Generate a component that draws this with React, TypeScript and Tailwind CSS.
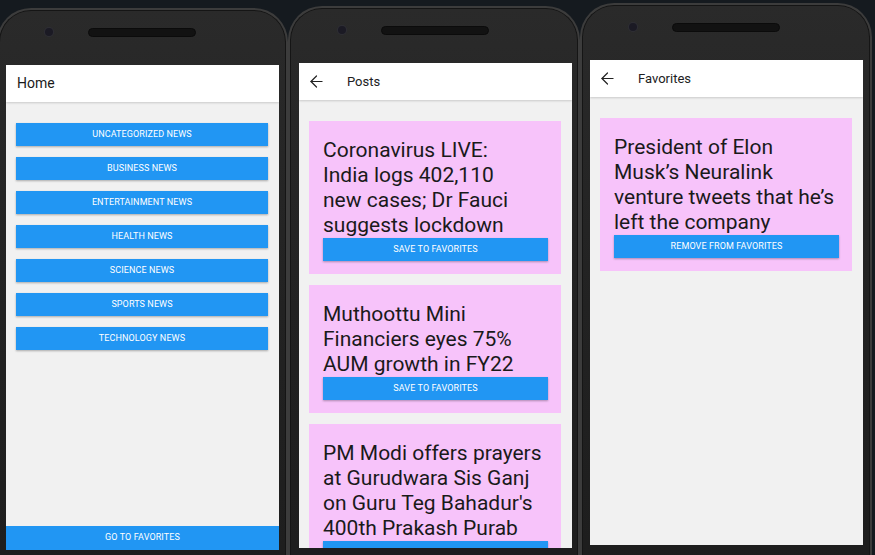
import { ArrowLeft } from 'lucide-react'
import type { ReactNode } from 'react'

const categories = [
  'Uncategorized News',
  'Business News',
  'Entertainment News',
  'Health News',
  'Science News',
  'Sports News',
  'Technology News',
]

// titles as the app wraps them
const posts = [
  ['Coronavirus LIVE:', 'India logs 402,110', 'new cases; Dr Fauci', 'suggests lockdown'],
  ['Muthoottu Mini', 'Financiers eyes 75%', 'AUM growth in FY22'],
  ['PM Modi offers prayers', 'at Gurudwara Sis Ganj', "on Guru Teg Bahadur's", '400th Prakash Purab'],
]

const favorites = [['President of Elon', 'Musk’s Neuralink', 'venture tweets that he’s', 'left the company']]

interface PhoneProps {
  title: string
  back?: boolean
  className: string
  children: ReactNode
  footer?: ReactNode
}

function Phone({ title, back, className, children, footer }: PhoneProps) {
  return (
    <div
      className={`shrink-0 h-[600px] rounded-t-[34px] border-x-2 border-t-2 border-[#3c3c3c] bg-gradient-to-b from-[#2a2a2a] via-[#222222] to-[#1d1d1d] shadow-[inset_0_0_0_1px_#151515] ${className}`}
    >
      {/* camera + speaker */}
      <div className="h-[55px] flex items-center gap-[35px] pl-[39px] pb-[11px]">
        <div className="w-[8px] h-[8px] rounded-full bg-[#1b1a24] ring-1 ring-[#2e2e35]" />
        <div className="w-[108px] h-[9px] rounded-full bg-[#121212] border border-[#0b0b0b] bg-[radial-gradient(#2a2a2a_0.6px,transparent_0.7px)] bg-[length:2px_2px]" />
      </div>

      {/* Screen */}
      <div className="w-[273px] h-[485px] bg-[#f1f1f1] flex flex-col overflow-hidden">
        <div className="relative z-10 h-[37px] shrink-0 bg-white flex items-center shadow-[0_1px_2px_rgba(0,0,0,0.16)]">
          {back ? (
            <>
              <ArrowLeft size={19} strokeWidth={1.5} className="ml-[8px] text-[#222]" />
              <span className="ml-[21px] text-[13px] text-[#212121]">{title}</span>
            </>
          ) : (
            <span className="ml-[11px] text-[14px] text-[#1a1a1a]">{title}</span>
          )}
        </div>
        <div className="flex-1 overflow-hidden">{children}</div>
        {footer}
      </div>
    </div>
  )
}

function BlueButton({ label, className = '' }: { label: string; className?: string }) {
  return (
    <button
      className={`h-[23px] shrink-0 bg-[#2196f3] text-white text-[9px] uppercase tracking-[0.1px] shadow-[0_1px_2px_rgba(0,0,0,0.3)] ${className}`}
    >
      {label}
    </button>
  )
}

function NewsCard({ lines, action }: { lines: string[]; action: string }) {
  return (
    <div className="w-[252px] bg-[#f7c3fa] pl-[14px] pr-[13px] pt-[17px] pb-[13px] flex flex-col">
      <p className="text-[21px] leading-[25px] text-[#1a1a1a] whitespace-nowrap">
        {lines.map((l) => (
          <span key={l} className="block">
            {l}
          </span>
        ))}
      </p>
      <BlueButton label={action} className="w-[225px]" />
    </div>
  )
}

export default function App() {
  return (
    <div
      className="w-[875px] h-[555px] overflow-hidden bg-[#151a1f] flex items-start"
      style={{ fontFamily: 'Roboto, "Noto Sans", sans-serif' }}
    >
      <Phone
        title="Home"
        className="ml-[-3px] mt-[8px] w-[291px] pl-[7px]"
        footer={<BlueButton label="Go to favorites" className="w-full h-[24px] shadow-none" />}
      >
        <div className="pt-[21px] pl-[10px] flex flex-col gap-[11px]">
          {categories.map((c) => (
            <BlueButton key={c} label={c} className="w-[252px]" />
          ))}
        </div>
      </Phone>

      <Phone title="Posts" back className="mt-[6px] w-[292px] pl-[9px]">
        <div className="pt-[21px] pl-[10px] flex flex-col gap-[11px]">
          {posts.map((p) => (
            <NewsCard key={p[0]} lines={p} action="Save to favorites" />
          ))}
        </div>
      </Phone>

      <Phone title="Favorites" back className="mt-[3px] w-[292px] pl-[8px]">
        <div className="pt-[21px] pl-[10px] flex flex-col gap-[11px]">
          {favorites.map((p) => (
            <NewsCard key={p[0]} lines={p} action="Remove from favorites" />
          ))}
        </div>
      </Phone>
    </div>
  )
}
